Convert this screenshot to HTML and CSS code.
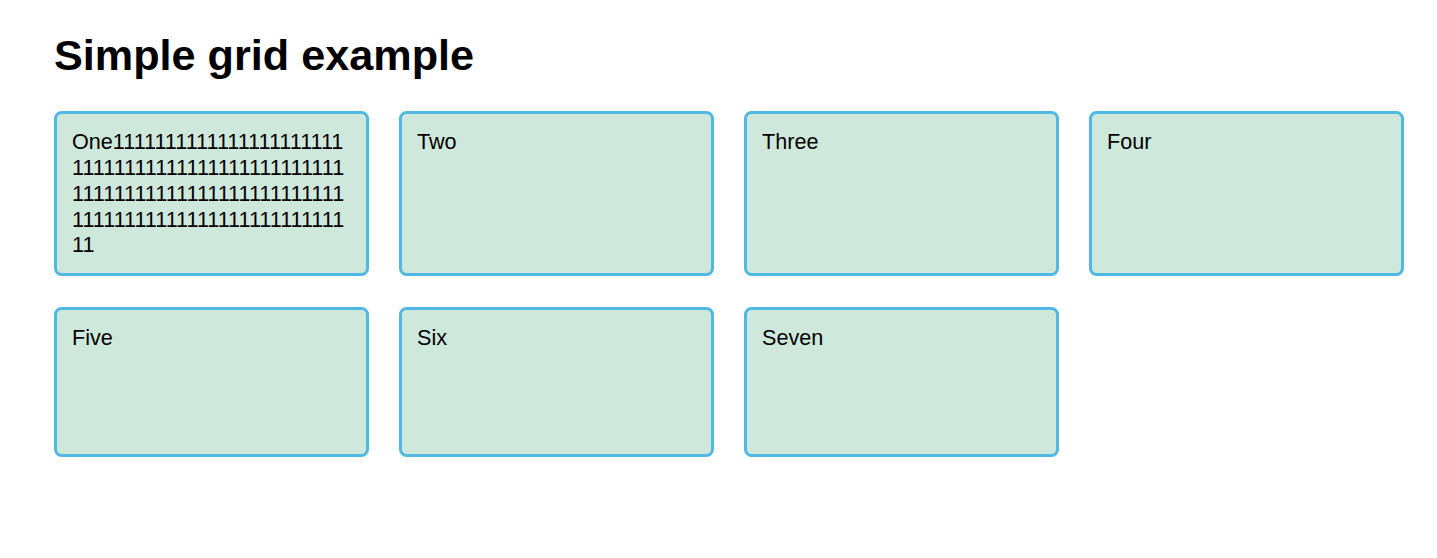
FILE: index.html
```html
<!DOCTYPE html>
<html lang="en">
<head>
<meta charset="utf-8">
<title>Simple grid example</title>
<link rel="stylesheet" href="styles.css">
</head>
<body>
<div class="page">
  <h1 class="title">Simple grid example</h1>
  <div class="container">
    <div class="card">One111111111111111111111111111111111111111111111111111111111111111111111111111111111111111111111111111111</div>
    <div class="card">Two</div>
    <div class="card">Three</div>
    <div class="card">Four</div>
    <div class="card">Five</div>
    <div class="card">Six</div>
    <div class="card">Seven</div>
  </div>
</div>
</body>
</html>
```

FILE: styles.css
```css
html, body {
  margin: 0;
  padding: 0;
  background: #fff;
}
.page {
  width: 1350px;
  padding: 30px 0 0 54px;
  font: 21.6px/1.2 "Liberation Sans", Arial, Helvetica, sans-serif;
  color: #000;
}
.title {
  font-size: 43.2px;
  font-weight: bold;
  margin: 0 0 29px;
}
.container {
  display: grid;
  grid-template-columns: repeat(4, 1fr);
  grid-auto-rows: minmax(150px, auto);
  gap: 31px 30px;
}
.card {
  border-radius: 7.5px;
  padding: 15px;
  background-color: rgb(207, 232, 220);
  border: 3px solid rgb(79, 185, 227);
  overflow-wrap: anywhere;
}
```
